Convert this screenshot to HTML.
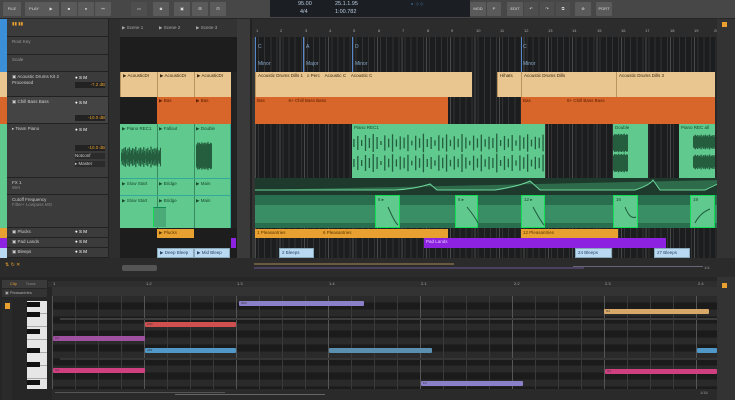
<!DOCTYPE html>
<html><head><meta charset="utf-8"><style>
*{margin:0;padding:0;box-sizing:border-box}
body{width:735px;height:400px;overflow:hidden;background:#262626;font-family:"Liberation Sans",sans-serif;font-size:5px;color:#bbb;position:relative}
.a{position:absolute}
.btn{position:absolute;top:2px;height:14px;background:#5a5a5a;border-radius:1px;color:#ddd;font-size:4px;text-align:center;line-height:14px}
.c{position:absolute;overflow:hidden;font-size:4.5px;color:#3a2a10;padding:1px 2px;white-space:nowrap}
.dr{background:#e9c690;border-left:1px solid #b8955e}
.bs{background:#d8652a;color:#5a2000}
.pn{background:#5fc98e;color:#17482c}
.pl{background:#e8a130;color:#5a3500}
.pd{background:#8d22e0;color:#e6ccff}
.bl{background:#b9d9f2;color:#2a4460;border:1px solid #8ab}
.tr{position:absolute;left:7px;width:101px;background:#3b3b3b;border-bottom:1px solid #222;color:#ccc;font-size:4.5px;padding:2px 5px}
.w{position:absolute;left:0;width:100%}
.note{position:absolute;height:5px;border-radius:1px;font-size:3px;color:#333;padding-left:2px}
</style></head><body>
<svg width="0" height="0" style="position:absolute"><defs><symbol id="wv" viewBox="0 0 100 100" preserveAspectRatio="none"><path d="M1 30V70M3 15V85M5 35V65M7 10V90M9 25V75M11 5V95M13 20V80M15 40V60M17 12V88M19 28V72M21 6V94M23 32V68M25 17V83M27 23V77M29 9V91M31 38V62M33 14V86M35 26V74M37 4V96M39 30V70M41 20V80M43 36V64M45 11V89M47 24V76M49 7V93M51 34V66M53 16V84M55 29V71M57 5V95M59 22V78M61 39V61M63 13V87M65 27V73M67 8V92M69 31V69M71 18V82M73 25V75M75 3V97M77 35V65M79 15V85M81 28V72M83 10V90M85 37V63M87 12V88M89 21V79M91 6V94M93 33V67M95 19V81M97 24V76M99 8V92" stroke="#245e3f" stroke-width="1.3" vector-effect="non-scaling-stroke"/></symbol></defs></svg>
<!-- toolbar -->
<div class="a" style="left:0;top:0;width:735px;height:18px;background:#474747"></div>
<div class="btn" style="left:3px;width:18px">FILE</div>
<div class="btn" style="left:25px;width:18px">PLAY</div>
<div class="btn" style="left:43px;width:16px">▶</div>
<div class="btn" style="left:61px;width:16px">■</div>
<div class="btn" style="left:78px;width:16px">●</div>
<div class="btn" style="left:95px;width:16px">⚯</div>
<div class="btn" style="left:131px;width:16px;background:#4e4e4e">▭</div>
<div class="btn" style="left:153px;width:16px">◙</div>
<div class="btn" style="left:174px;width:16px">▣</div>
<div class="btn" style="left:192px;width:16px">⊞</div>
<div class="btn" style="left:210px;width:16px">⊟</div>
<div class="a" style="left:270px;top:0;width:200px;height:17px;background:#1b1f24;color:#bcd;font-size:5.5px">
<span class="a" style="left:28px;top:1px">95.00</span><span class="a" style="left:65px;top:1px">25.1.1.95</span>
<span class="a" style="left:30px;top:9px">4/4</span><span class="a" style="left:65px;top:9px">1:00.782</span>
<span class="a" style="left:140px;top:2px;color:#6af">◔ ⁘⁘</span></div>
<div class="btn" style="left:470px;width:16px">MOD</div>
<div class="btn" style="left:487px;width:14px">P</div>
<div class="btn" style="left:507px;width:16px">EDIT</div>
<div class="btn" style="left:524px;width:14px;background:#4e4e4e">↶</div>
<div class="btn" style="left:540px;width:14px;background:#4e4e4e">↷</div>
<div class="btn" style="left:556px;width:14px;background:#4e4e4e">⧉</div>
<div class="btn" style="left:575px;width:16px">⊗</div>
<div class="btn" style="left:596px;width:16px">PORT</div>

<div class="a" style="left:0;top:19px;width:735px;height:240px;background:#222"></div>
<div class="a" style="left:0;top:19px;width:7px;height:53px;background:#3a8fd8"></div>
<div class="tr" style="top:19px;height:18px;color:#e8a030">▮▮ ▮▮</div>
<div class="tr" style="top:37px;height:18px;color:#999">Root Key</div>
<div class="tr" style="top:55px;height:17px;color:#999">Scale</div>
<div class="a" style="left:0;top:72px;width:7px;height:25px;background:#e9c690"></div>
<div class="tr" style="top:72px;height:25px">▣ Acoustic Drums Kit 2<br>Processed<span class="a" style="left:68px;top:3px;color:#fff">● S M</span><span class="a" style="left:68px;top:10px;width:30px;height:6px;background:#222;color:#e8a030;text-align:right">-7.2 dB</span></div>
<div class="a" style="left:0;top:97px;width:7px;height:27px;background:#d8652a"></div>
<div class="tr" style="top:97px;height:27px;background:#444">▣ Chill Bass Bass<span class="a" style="left:68px;top:3px;color:#fff">● S M</span><span class="a" style="left:68px;top:18px;width:30px;height:6px;background:#222;color:#e8a030;text-align:right">-10.0 dB</span></div>
<div class="a" style="left:0;top:124px;width:7px;height:104px;background:#5fc98e"></div>
<div class="tr" style="top:124px;height:54px">▸ Team Piano<span class="a" style="left:68px;top:3px;color:#fff">● S M</span><span class="a" style="left:68px;top:21px;width:30px;height:6px;background:#222;color:#e8a030;text-align:right">-10.0 dB</span><span class="a" style="left:68px;top:29px;width:30px;height:6px;background:#2b2b2b">Notconf</span><span class="a" style="left:68px;top:37px;width:30px;height:6px;background:#2b2b2b">▸ Master</span></div>
<div class="tr" style="top:178px;height:17px">FX 1<br><span style="color:#888">Wet</span></div>
<div class="tr" style="top:195px;height:33px">Cutoff Frequency<br><span style="color:#888">Filter+ Lowpass MG</span></div>
<div class="a" style="left:0;top:228px;width:7px;height:10px;background:#e8a130"></div>
<div class="tr" style="top:228px;height:10px;padding-top:1px">▣ Plucks<span class="a" style="left:68px;top:1px;color:#fff">● S M</span></div>
<div class="a" style="left:0;top:238px;width:7px;height:10px;background:#8d22e0"></div>
<div class="tr" style="top:238px;height:10px;padding-top:1px">▣ Pad Lands<span class="a" style="left:68px;top:1px;color:#fff">● S M</span></div>
<div class="a" style="left:0;top:248px;width:7px;height:10px;background:#b9d9f2"></div>
<div class="tr" style="top:248px;height:10px;padding-top:1px">▣ Bleeps<span class="a" style="left:68px;top:1px;color:#fff">● S M</span></div>

<!-- launcher -->
<div class="a" style="left:109px;top:19px;width:11px;height:239px;background:#2e2e2e"></div>
<div class="a" style="left:120px;top:19px;width:117px;height:18px;background:#333;color:#aaa;font-size:4.5px">
<span class="a" style="left:2px;top:6px">▶ Scene 1</span><span class="a" style="left:39px;top:6px">▶ Scene 2</span><span class="a" style="left:76px;top:6px">▶ Scene 3</span></div>
<div class="a" style="left:120px;top:37px;width:117px;height:35px;background:#1d1d1d"></div>
<div class="c dr" style="left:120px;top:72px;width:37px;height:25px">▶ AcousticDr</div>
<div class="c dr" style="left:157px;top:72px;width:37px;height:25px">▶ AcousticDr</div>
<div class="c dr" style="left:194px;top:72px;width:37px;height:25px">▶ AcousticDr</div>
<div class="a" style="left:120px;top:97px;width:37px;height:27px;background:#1d1d1d"></div>
<div class="c bs" style="left:157px;top:97px;width:37px;height:27px">▶ Bas</div>
<div class="c bs" style="left:194px;top:97px;width:37px;height:27px">▶ Bas</div>
<div class="c pn" style="left:120px;top:124px;width:111px;height:104px;border-right:1px solid #3a9"></div>
<div class="a" style="left:157px;top:124px;width:1px;height:104px;background:#3a8a60"></div>
<div class="a" style="left:194px;top:124px;width:1px;height:104px;background:#3a8a60"></div>
<div class="a" style="left:122px;top:126px;color:#17482c;font-size:4.5px">▶ Piano REC1</div>
<div class="a" style="left:159px;top:126px;color:#17482c;font-size:4.5px">▶ Fallout</div>
<div class="a" style="left:196px;top:126px;color:#17482c;font-size:4.5px">▶ Double</div>
<svg class="a" style="left:121px;top:146px" width="40" height="22"><use href="#wv" width="40" height="22"/></svg>
<svg class="a" style="left:196px;top:141px" width="16" height="30"><use href="#wv" width="16" height="30"/></svg>
<div class="a" style="left:120px;top:178px;width:111px;height:1px;background:#3a9"></div>
<div class="a" style="left:122px;top:181px;color:#17482c;font-size:4.5px">▶ Slow Start</div>
<div class="a" style="left:159px;top:181px;color:#17482c;font-size:4.5px">▶ Bridge</div>
<div class="a" style="left:196px;top:181px;color:#17482c;font-size:4.5px">▶ Main</div>
<div class="a" style="left:120px;top:195px;width:111px;height:1px;background:#3a9"></div>
<div class="a" style="left:122px;top:198px;color:#17482c;font-size:4.5px">▶ Slow Start</div>
<div class="a" style="left:159px;top:198px;color:#17482c;font-size:4.5px">▶ Bridge</div>
<div class="a" style="left:196px;top:198px;color:#17482c;font-size:4.5px">▶ Main</div>
<div class="a" style="left:153px;top:207px;width:13px;height:20px;border-left:1px solid #1d5;border-top:1px solid #185;background:#4aaa78"></div>
<div class="a" style="left:120px;top:228px;width:117px;height:30px;background:#1d1d1d"></div>
<div class="c pl" style="left:157px;top:229px;width:37px;height:9px">▶ Plucks</div>
<div class="a" style="left:231px;top:238px;width:5px;height:10px;background:#8d22e0"></div>
<div class="c bl" style="left:157px;top:248px;width:37px;height:10px">▶ Deep Bleep</div>
<div class="c bl" style="left:194px;top:248px;width:36px;height:10px">▶ Mid Bleep</div>
<div class="a" style="left:237px;top:19px;width:13px;height:239px;background:#3a3a3a"></div>

<!-- arrangement -->
<div class="a" style="left:252px;top:19px;width:465px;height:18px;background:#2c2c2c;color:#aaa;font-size:4px">
<span class="a" style="left:4px;top:9px">1</span><span class="a" style="left:28px;top:9px">2</span><span class="a" style="left:53px;top:9px">3</span><span class="a" style="left:77px;top:9px">4</span><span class="a" style="left:101px;top:9px">5</span><span class="a" style="left:126px;top:9px">6</span><span class="a" style="left:150px;top:9px">7</span><span class="a" style="left:175px;top:9px">8</span><span class="a" style="left:199px;top:9px">9</span><span class="a" style="left:224px;top:9px">10</span><span class="a" style="left:248px;top:9px">11</span><span class="a" style="left:272px;top:9px">12</span><span class="a" style="left:296px;top:9px">13</span><span class="a" style="left:320px;top:9px">14</span><span class="a" style="left:345px;top:9px">15</span><span class="a" style="left:369px;top:9px">16</span><span class="a" style="left:393px;top:9px">17</span><span class="a" style="left:418px;top:9px">18</span><span class="a" style="left:442px;top:9px">19</span><span class="a" style="left:462px;top:9px">20</span></div>
<div class="a" style="left:252px;top:37px;width:465px;height:221px;background:#1c1d1e repeating-linear-gradient(90deg,#333 0 1px,transparent 1px 6.1px);"></div>
<div class="a" style="left:252px;top:37px;width:465px;height:221px;background:repeating-linear-gradient(90deg,#4a4a4a 0 1px,transparent 1px 24.4px);background-position:3px 0"></div>
<div class="a" style="left:255px;top:37px;width:1px;height:35px;background:#58c"></div>
<div class="a" style="left:303px;top:37px;width:1px;height:35px;background:#58c"></div>
<div class="a" style="left:352px;top:37px;width:1px;height:35px;background:#58c"></div>
<div class="a" style="left:521px;top:37px;width:1px;height:35px;background:#58c"></div>
<div class="a" style="left:258px;top:44px;color:#8ac">C</div><div class="a" style="left:306px;top:44px;color:#8ac">A</div><div class="a" style="left:355px;top:44px;color:#8ac">D</div><div class="a" style="left:523px;top:44px;color:#8ac">C</div>
<div class="a" style="left:258px;top:61px;color:#8ac">Minor</div><div class="a" style="left:306px;top:61px;color:#8ac">Major</div><div class="a" style="left:355px;top:61px;color:#8ac">Minor</div><div class="a" style="left:523px;top:61px;color:#8ac">Minor</div>
<div class="c dr" style="left:255px;top:72px;width:217px;height:25px">Acoustic Drums Dills 1 &nbsp; ≡ Perc &nbsp;&nbsp; Acoustic C &nbsp;&nbsp; Acoustic C</div>
<div class="c dr" style="left:497px;top:72px;width:24px;height:25px">Hihats</div>
<div class="c dr" style="left:521px;top:72px;width:95px;height:25px">Acoustic Drums Dills</div>
<div class="c dr" style="left:616px;top:72px;width:99px;height:25px">Acoustic Drums Dills 3</div>
<div class="c bs" style="left:255px;top:97px;width:193px;height:27px">Bas &nbsp;&nbsp;&nbsp;&nbsp;&nbsp;&nbsp;&nbsp;&nbsp;&nbsp;&nbsp;&nbsp;&nbsp;&nbsp;&nbsp;&nbsp;&nbsp;&nbsp; 6+ Chill Bass Bass</div>
<div class="c bs" style="left:521px;top:97px;width:194px;height:27px">Bas &nbsp;&nbsp;&nbsp;&nbsp;&nbsp;&nbsp;&nbsp;&nbsp;&nbsp;&nbsp;&nbsp;&nbsp;&nbsp;&nbsp;&nbsp;&nbsp;&nbsp;&nbsp;&nbsp;&nbsp;&nbsp;&nbsp;&nbsp;&nbsp;&nbsp;&nbsp;&nbsp; 6+ Chill Bass Bass</div>
<div class="c pn" style="left:352px;top:124px;width:193px;height:54px">Piano REC1<svg class="w" style="top:9px" width="193" height="20"><use href="#wv" width="193" height="20"/></svg><svg class="w" style="top:29px" width="193" height="20"><use href="#wv" width="193" height="20"/></svg></div>
<div class="c pn" style="left:613px;top:124px;width:35px;height:54px">Double<svg class="w" style="top:9px" width="15" height="20"><use href="#wv" width="15" height="20"/></svg><svg class="w" style="top:29px" width="15" height="20"><use href="#wv" width="15" height="20"/></svg></div>
<div class="c pn" style="left:679px;top:124px;width:36px;height:54px">Piano REC all<svg class="w" style="top:10px;left:14px" width="22" height="16"><use href="#wv" width="22" height="16"/></svg><svg class="w" style="top:30px;left:14px" width="22" height="16"><use href="#wv" width="22" height="16"/></svg></div>
<div class="a" style="left:255px;top:178px;width:462px;height:17px;background:#1e3a2c"></div>
<svg class="a" style="left:255px;top:178px" width="462" height="17"><path d="M0 12 L140 12 Q160 11 175 6 L182 12 L240 12 Q265 8 275 3 L285 12 L380 12 Q395 7 398 2 L405 12 L450 12 Q465 5 470 2" stroke="#6cd49a" stroke-width="1" fill="#2d6b4a"/></svg>
<div class="a" style="left:255px;top:195px;width:462px;height:33px;background:#2a6e50"></div>
<div class="a" style="left:255px;top:205px;width:462px;height:18px;background:#3a8e66"></div>
<div class="c pn" style="left:375px;top:195px;width:25px;height:33px;border:1px solid #1d5">6 ▸</div>
<div class="c pn" style="left:455px;top:195px;width:23px;height:33px;border:1px solid #1d5">6 ▸</div>
<div class="c pn" style="left:521px;top:195px;width:24px;height:33px;border:1px solid #1d5">12 ▸</div>
<div class="c pn" style="left:613px;top:195px;width:25px;height:33px;border:1px solid #1d5">16</div>
<div class="c pn" style="left:690px;top:195px;width:25px;height:33px;border:1px solid #1d5">19</div>
<svg class="a" style="left:255px;top:195px" width="462" height="33"><path d="M133 12 Q140 28 143 30 M212 12 Q220 22 223 28 M278 12 Q285 25 289 30 M370 12 Q375 25 381 22 M440 28 Q445 18 455 14" stroke="#1f5a3c" stroke-width="1" fill="none"/></svg>
<div class="c pl" style="left:255px;top:229px;width:193px;height:9px">1 Pleasantries &nbsp;&nbsp;&nbsp;&nbsp;&nbsp;&nbsp;&nbsp;&nbsp;&nbsp;&nbsp;&nbsp;&nbsp;&nbsp;&nbsp;&nbsp;&nbsp;&nbsp;&nbsp;&nbsp;&nbsp;&nbsp;&nbsp;&nbsp;&nbsp;&nbsp;&nbsp;&nbsp;&nbsp; 6 Pleasantries</div>
<div class="c pl" style="left:521px;top:229px;width:97px;height:9px">12 Pleasantries</div>
<div class="c pd" style="left:424px;top:238px;width:242px;height:10px">Pad Lands</div>
<div class="c bl" style="left:279px;top:248px;width:35px;height:10px">2 Bleeps</div>
<div class="c bl" style="left:575px;top:248px;width:37px;height:10px">24 Bleeps</div>
<div class="c bl" style="left:654px;top:248px;width:36px;height:10px">27 Bleeps</div>
<div class="a" style="left:717px;top:19px;width:18px;height:258px;background:#333"></div>
<div class="a" style="left:722px;top:22px;width:5px;height:5px;background:#e8a030"></div>

<!-- scrollbar region -->
<div class="a" style="left:0;top:258px;width:735px;height:19px;background:#2b2b2b"></div>
<div class="a" style="left:5px;top:262px;color:#e8a030;font-size:5px">⇅ ↻ ✕</div>
<div class="a" style="left:122px;top:265px;width:35px;height:6px;background:#555;border-radius:2px"></div>
<div class="a" style="left:254px;top:263px;width:200px;height:2px;background:#6a5a40"></div>
<div class="a" style="left:254px;top:267px;width:330px;height:2px;background:#4a4060"></div>
<div class="a" style="left:573px;top:266px;width:130px;height:1px;background:#667"></div>
<div class="a" style="left:704px;top:265px;color:#999;font-size:4px">1/4</div>

<!-- editor -->
<div class="a" style="left:0;top:277px;width:735px;height:123px;background:#262626"></div>
<div class="a" style="left:2px;top:280px;width:45px;height:8px;background:#3a3a3a;color:#e8a030;font-size:4px;padding:1px 8px">Clip &nbsp;&nbsp;&nbsp;&nbsp;&nbsp;&nbsp; <span style="color:#888">Track</span></div>
<div class="a" style="left:2px;top:289px;width:45px;height:8px;background:#333;color:#aaa;font-size:4px;padding:1px 3px">▣ Pleasantries</div>
<div class="a" style="left:2px;top:300px;width:10px;height:100px;background:#2a2a2a"></div>
<div class="a" style="left:5px;top:303px;width:5px;height:6px;background:#e8a030"></div>
<div class="a" style="left:27px;top:301px;width:20px;height:88px;background:#e6e6e6"></div>
<div class="a" style="left:27px;top:301px;width:20px;height:88px;background:repeating-linear-gradient(180deg,transparent 0 12px,#aaa 12px 13px)"></div>
<div class="a" style="left:27px;top:302px;width:13px;height:5px;background:#111"></div>
<div class="a" style="left:27px;top:312px;width:13px;height:5px;background:#111"></div>
<div class="a" style="left:27px;top:329px;width:13px;height:5px;background:#111"></div>
<div class="a" style="left:27px;top:348px;width:13px;height:5px;background:#111"></div>
<div class="a" style="left:27px;top:362px;width:13px;height:5px;background:#111"></div>
<div class="a" style="left:27px;top:380px;width:13px;height:5px;background:#111"></div>
<div class="a" style="left:48px;top:281px;width:669px;height:6px;background:#2e2e2e;color:#aaa;font-size:4px"><span class="a" style="left:5px;top:0">1</span><span class="a" style="left:98px">1.2</span><span class="a" style="left:189px">1.3</span><span class="a" style="left:281px">1.4</span><span class="a" style="left:373px">2.1</span><span class="a" style="left:466px">2.2</span><span class="a" style="left:557px">2.3</span><span class="a" style="left:650px">2.4</span></div>
<div class="a" style="left:52px;top:287px;width:665px;height:9px;background:#333"></div>
<div class="a" style="left:52px;top:296px;width:665px;height:93px;background:#1e1e1e repeating-linear-gradient(180deg,#2a2a2a 0 6px,#222 6px 7px,#1b1b1b 7px 13px,#222 13px 14px)"></div>
<div class="a" style="left:52px;top:296px;width:665px;height:93px;background:repeating-linear-gradient(90deg,#3a3a3a 0 1px,transparent 1px 23px)"></div>
<div class="a" style="left:52px;top:296px;width:665px;height:93px;background:repeating-linear-gradient(90deg,#555 0 1px,transparent 1px 92px)"></div>
<div class="a" style="left:60px;top:318px;width:657px;height:2px;background:#3d3d3d"></div>
<div class="a" style="left:60px;top:358px;width:657px;height:2px;background:#353535"></div>
<div class="note" style="left:239px;top:301px;width:125px;background:#8a80c8">D#4</div>
<div class="note" style="left:145px;top:322px;width:91px;background:#d05050">C#4</div>
<div class="note" style="left:53px;top:336px;width:92px;background:#a050a0">C4</div>
<div class="note" style="left:145px;top:348px;width:91px;background:#5098c8">A#3</div>
<div class="note" style="left:329px;top:348px;width:103px;background:#5a8fb0"></div>
<div class="note" style="left:697px;top:348px;width:20px;background:#5098c8"></div>
<div class="note" style="left:53px;top:368px;width:92px;background:#d04080">G3</div>
<div class="note" style="left:421px;top:381px;width:102px;background:#8a80c8">F3</div>
<div class="note" style="left:604px;top:309px;width:105px;background:#d8a868">D4</div>
<div class="note" style="left:605px;top:369px;width:112px;background:#d04080">G3</div>
<div class="a" style="left:52px;top:389px;width:665px;height:11px;background:#2a2a2a"></div>
<div class="a" style="left:55px;top:392px;width:170px;height:1px;background:#555"></div>
<div class="a" style="left:175px;top:394px;width:150px;height:1px;background:#666"></div>
<div class="a" style="left:700px;top:390px;color:#999;font-size:4px">1/16</div>
<div class="a" style="left:717px;top:277px;width:18px;height:123px;background:#333"></div>
<div class="a" style="left:722px;top:283px;width:5px;height:5px;background:#e8a030"></div>
</body></html>
